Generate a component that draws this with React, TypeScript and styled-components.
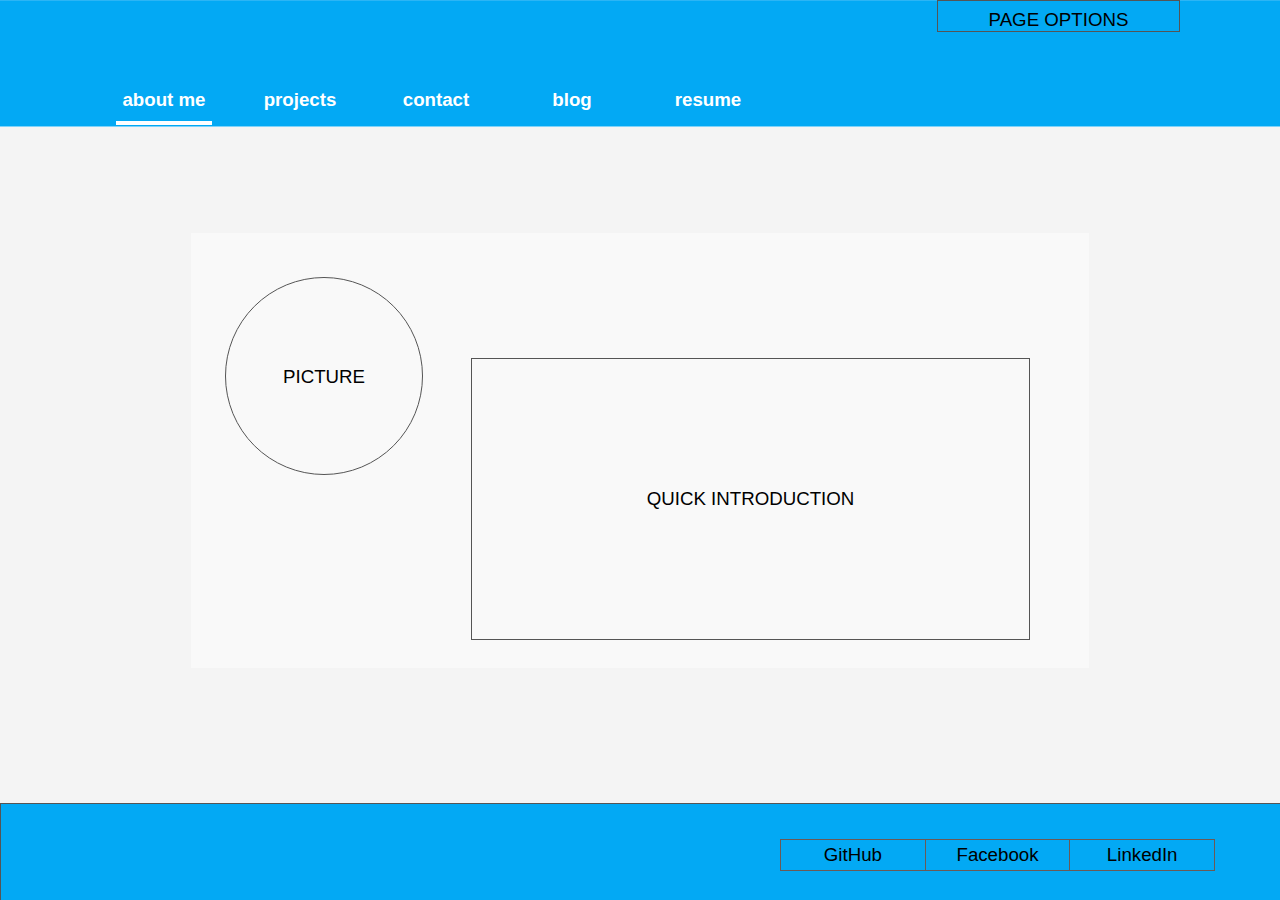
import React from "react";
import styled, { createGlobalStyle } from "styled-components";

const GlobalStyle = createGlobalStyle`
  html, body {
    margin: 0;
    padding: 0;
    background: #f4f4f4;
    font-family: "Liberation Sans", Arial, sans-serif;
  }
  * {
    box-sizing: border-box;
  }
`;

const Page = styled.div`
  width: 1280px;
  height: 900px;
  display: flex;
  flex-direction: column;
  overflow: hidden;
`;

const Header = styled.header`
  height: 127px;
  flex-shrink: 0;
  background: #03a9f4;
  border-top: 1px solid #2cb5f5;
  border-bottom: 1px solid #7fd3fa;
  display: flex;
  flex-direction: column;
`;

const TopBar = styled.div`
  display: flex;
  justify-content: flex-end;
  padding-right: 100px;
  margin-top: -1px;
`;

const OptionsButton = styled.div`
  width: 243px;
  height: 32px;
  border: 1px solid #555;
  padding-top: 9px;
  text-align: center;
  font-size: 18.7px;
  line-height: 20px;
  color: #000;
`;

const Nav = styled.nav`
  margin-top: auto;
  display: flex;
  gap: 40px;
  padding-left: 116px;
  padding-bottom: 1px;
`;

const Tab = styled.div<{ $active?: boolean }>`
  width: 96px;
  height: 46px;
  display: flex;
  align-items: center;
  justify-content: center;
  border-bottom: 4px solid ${(p) => (p.$active ? "#ffffff" : "transparent")};
  color: #fff;
  font-weight: bold;
  font-size: 18.7px;
`;

const Main = styled.main`
  flex: 1;
  display: flex;
  justify-content: center;
  align-items: flex-start;
  padding-top: 106px;
`;

const Card = styled.section`
  width: 898px;
  height: 435px;
  background: #f9f9f9;
  display: flex;
  align-items: flex-start;
  padding: 44px 0 0 34px;
`;

const Picture = styled.div`
  width: 198px;
  height: 198px;
  border-radius: 50%;
  border: 1px solid #555;
  display: flex;
  align-items: center;
  justify-content: center;
  padding-top: 2px;
  font-size: 18.7px;
  color: #000;
`;

const Intro = styled.div`
  width: 559px;
  height: 282px;
  margin: 81px 0 0 48px;
  border: 1px solid #555;
  display: flex;
  align-items: center;
  justify-content: center;
  font-size: 18.7px;
  color: #000;
`;

const Footer = styled.footer`
  height: 97px;
  flex-shrink: 0;
  width: 1290px;
  background: #03a9f4;
  border-top: 1px solid #555;
  border-left: 1px solid #555;
  display: flex;
  justify-content: flex-end;
  padding: 35px 75px 0 0;
`;

const Socials = styled.div`
  width: 435px;
  display: flex;
  align-self: flex-start;
`;

const SocialLink = styled.a`
  flex: 1;
  height: 32px;
  border: 1px solid #6b5a55;
  display: flex;
  align-items: center;
  justify-content: center;
  font-size: 18.7px;
  color: #000;
  text-decoration: none;
  & + & {
    margin-left: -1px;
  }
`;

const tabs = ["about me", "projects", "contact", "blog", "resume"];
const socials = ["GitHub", "Facebook", "LinkedIn"];

export default function App() {
  return (
    <>
      <GlobalStyle />
      <Page>
        <Header>
          <TopBar>
            <OptionsButton>PAGE OPTIONS</OptionsButton>
          </TopBar>
          <Nav>
            {tabs.map((t, i) => (
              <Tab key={t} $active={i === 0}>
                {t}
              </Tab>
            ))}
          </Nav>
        </Header>
        <Main>
          <Card>
            <Picture>PICTURE</Picture>
            <Intro>QUICK INTRODUCTION</Intro>
          </Card>
        </Main>
        <Footer>
          <Socials>
            {socials.map((s) => (
              <SocialLink key={s}>{s}</SocialLink>
            ))}
          </Socials>
        </Footer>
      </Page>
    </>
  );
}
